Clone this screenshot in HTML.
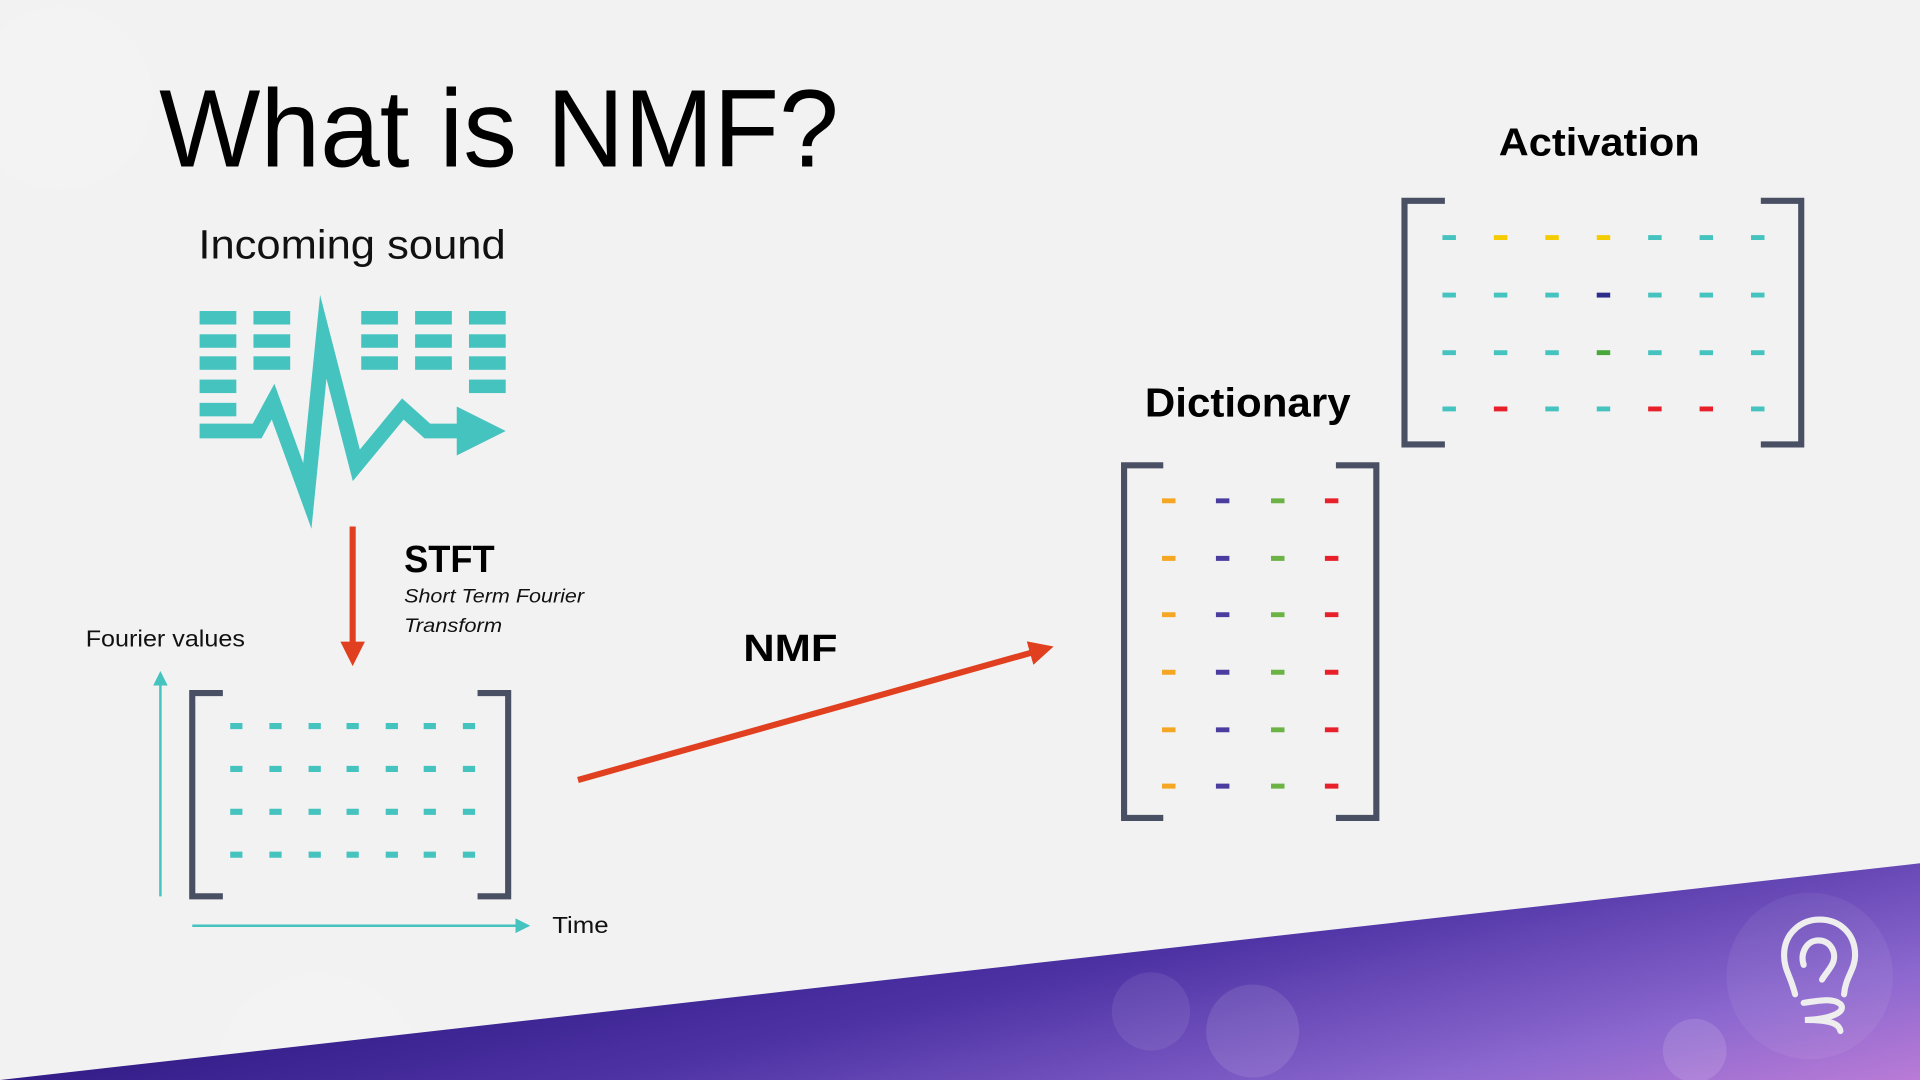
<!DOCTYPE html>
<html><head><meta charset="utf-8"><style>html,body{margin:0;padding:0;background:#f2f2f2;overflow:hidden;width:1920px;height:1080px}svg{display:block;position:absolute;left:0;top:0}</style></head>
<body>
<svg width="1920" height="1080" viewBox="0 0 1568 882" xmlns="http://www.w3.org/2000/svg">
<defs>
<linearGradient id="g" x1="0" y1="0.5" x2="1" y2="1">
<stop offset="0" stop-color="#1f0c72"/><stop offset="0.45" stop-color="#4d32a4"/><stop offset="0.8" stop-color="#8c68cf"/><stop offset="1" stop-color="#b97bd6"/>
</linearGradient>
<marker id="ah" markerWidth="4" markerHeight="4" refX="1" refY="2" orient="auto" markerUnits="strokeWidth"><path d="M0,0 L4,2 L0,4z" fill="#e0401f"/></marker>
<marker id="at" markerWidth="6" markerHeight="6" refX="1" refY="3" orient="auto" markerUnits="strokeWidth"><path d="M0,0 L6,3 L0,6z" fill="#45c3bf"/></marker>
</defs>
<rect width="1568" height="882" fill="#f2f2f2"/>
<circle cx="50" cy="80" r="75" fill="#f3f3f3"/>
<circle cx="260" cy="880" r="85" fill="#f3f3f3"/>
<polygon points="0,882 1568,705 1568,882" fill="url(#g)"/>
<circle cx="940" cy="826" r="32" fill="#fff" opacity="0.08"/>
<circle cx="1023" cy="842" r="38" fill="#fff" opacity="0.1"/>
<circle cx="1384" cy="858" r="26" fill="#fff" opacity="0.12"/>
<circle cx="1478" cy="797" r="68" fill="#fff" opacity="0.06"/>
<g fill="none" stroke="#eeeeee" stroke-width="5" stroke-linecap="round">
<path d="M1466,812 C1462,796 1457,792 1457,780 C1457,762 1471,751 1486,751 C1502,751 1515,762 1515,780 C1515,792 1507,798 1506,812"/>
<path d="M1473,788 C1470,779 1475,768 1485,768 C1495,768 1500,778 1497,786 C1495,791 1491,795 1488,800"/>
<path d="M1473,819 C1485,817 1497,815 1503,820 C1508,826 1497,832 1474,833 C1495,833 1502,836 1503,842"/>
</g>
<text x="130" y="136" font-family="Liberation Sans, sans-serif" font-size="90" fill="#000" textLength="555" lengthAdjust="spacingAndGlyphs">What is NMF?</text>
<text x="162" y="211" font-family="Liberation Sans, sans-serif" font-size="33" fill="#111" textLength="251" lengthAdjust="spacingAndGlyphs">Incoming sound</text>
<text x="1224" y="127" font-family="Liberation Sans, sans-serif" font-weight="bold" font-size="32" fill="#000" textLength="164" lengthAdjust="spacingAndGlyphs">Activation</text>
<text x="935" y="340" font-family="Liberation Sans, sans-serif" font-weight="bold" font-size="33" fill="#000" textLength="168" lengthAdjust="spacingAndGlyphs">Dictionary</text>
<text x="330" y="467" font-family="Liberation Sans, sans-serif" font-weight="bold" font-size="31" fill="#000" textLength="74" lengthAdjust="spacingAndGlyphs">STFT</text>
<text x="330" y="492" font-family="Liberation Sans, sans-serif" font-style="italic" font-size="16" fill="#111" textLength="147" lengthAdjust="spacingAndGlyphs">Short Term Fourier</text>
<text x="330" y="516" font-family="Liberation Sans, sans-serif" font-style="italic" font-size="16" fill="#111" textLength="80" lengthAdjust="spacingAndGlyphs">Transform</text>
<text x="607" y="540" font-family="Liberation Sans, sans-serif" font-weight="bold" font-size="31" fill="#000" textLength="77" lengthAdjust="spacingAndGlyphs">NMF</text>
<text x="70" y="528" font-family="Liberation Sans, sans-serif" font-size="19" fill="#111" textLength="130" lengthAdjust="spacingAndGlyphs">Fourier values</text>
<text x="451" y="762" font-family="Liberation Sans, sans-serif" font-size="19" fill="#111" textLength="46" lengthAdjust="spacingAndGlyphs">Time</text>
<g fill="#45c3bf">
<rect x="163" y="254" width="30" height="11"/><rect x="163" y="273" width="30" height="11"/><rect x="163" y="291" width="30" height="11"/><rect x="163" y="310" width="30" height="11"/><rect x="163" y="329" width="30" height="11"/>
<rect x="207" y="254" width="30" height="11"/><rect x="207" y="273" width="30" height="11"/><rect x="207" y="291" width="30" height="11"/>
<rect x="295" y="254" width="30" height="11"/><rect x="295" y="273" width="30" height="11"/><rect x="295" y="291" width="30" height="11"/>
<rect x="339" y="254" width="30" height="11"/><rect x="339" y="273" width="30" height="11"/><rect x="339" y="291" width="30" height="11"/>
<rect x="383" y="254" width="30" height="11"/><rect x="383" y="273" width="30" height="11"/><rect x="383" y="291" width="30" height="11"/><rect x="383" y="310" width="30" height="11"/>
<polygon points="373,332 413,352 373,372"/>
</g>
<polyline points="163,352 210,352 223,328 251,405 264,275 291,380 329,334 349,352 378,352" fill="none" stroke="#45c3bf" stroke-width="12" stroke-linejoin="miter" stroke-miterlimit="12"/>
<line x1="288" y1="430" x2="288" y2="529" stroke="#e0401f" stroke-width="5" marker-end="url(#ah)"/>
<line x1="472" y1="637" x2="846" y2="532" stroke="#e0401f" stroke-width="5" marker-end="url(#ah)"/>
<line x1="131" y1="732" x2="131" y2="558" stroke="#45c3bf" stroke-width="2" marker-end="url(#at)"/>
<line x1="157" y1="756" x2="423" y2="756" stroke="#45c3bf" stroke-width="2" marker-end="url(#at)"/>
<g fill="none" stroke="#4a5064" stroke-width="5">
<polyline points="182,566 157,566 157,732 182,732"/><polyline points="390,566 415,566 415,732 390,732"/>
<polyline points="950,380 918,380 918,668 950,668"/><polyline points="1091,380 1124,380 1124,668 1091,668"/>
<polyline points="1180,164 1147,164 1147,363 1180,363"/><polyline points="1438,164 1471,164 1471,363 1438,363"/>
</g>
<g stroke="#45c3bf" stroke-width="5">
<path d="M188,593h10M220,593h10M252,593h10M283,593h10M315,593h10M346,593h10M378,593h10
M188,628h10M220,628h10M252,628h10M283,628h10M315,628h10M346,628h10M378,628h10
M188,663h10M220,663h10M252,663h10M283,663h10M315,663h10M346,663h10M378,663h10
M188,698h10M220,698h10M252,698h10M283,698h10M315,698h10M346,698h10M378,698h10"/>
</g>
<g stroke-width="4">
<path stroke="#f5a623" d="M949,409h11M949,456h11M949,502h11M949,549h11M949,596h11M949,642h11"/>
<path stroke="#4b3ca0" d="M993,409h11M993,456h11M993,502h11M993,549h11M993,596h11M993,642h11"/>
<path stroke="#6ab344" d="M1038,409h11M1038,456h11M1038,502h11M1038,549h11M1038,596h11M1038,642h11"/>
<path stroke="#e8202a" d="M1082,409h11M1082,456h11M1082,502h11M1082,549h11M1082,596h11M1082,642h11"/>
</g>
<g stroke-width="4">
<path stroke="#45c3bf" d="M1178,194h11M1346,194h11M1388,194h11M1430,194h11
M1178,241h11M1220,241h11M1262,241h11M1346,241h11M1388,241h11M1430,241h11
M1178,288h11M1220,288h11M1262,288h11M1346,288h11M1388,288h11M1430,288h11
M1178,334h11M1262,334h11M1304,334h11M1430,334h11"/>
<path stroke="#f5cc00" d="M1220,194h11M1262,194h11M1304,194h11"/>
<path stroke="#2b2f8a" d="M1304,241h11"/>
<path stroke="#4aa83a" d="M1304,288h11"/>
<path stroke="#e8202a" d="M1220,334h11M1346,334h11M1388,334h11"/>
</g>
</svg>
</body></html>
